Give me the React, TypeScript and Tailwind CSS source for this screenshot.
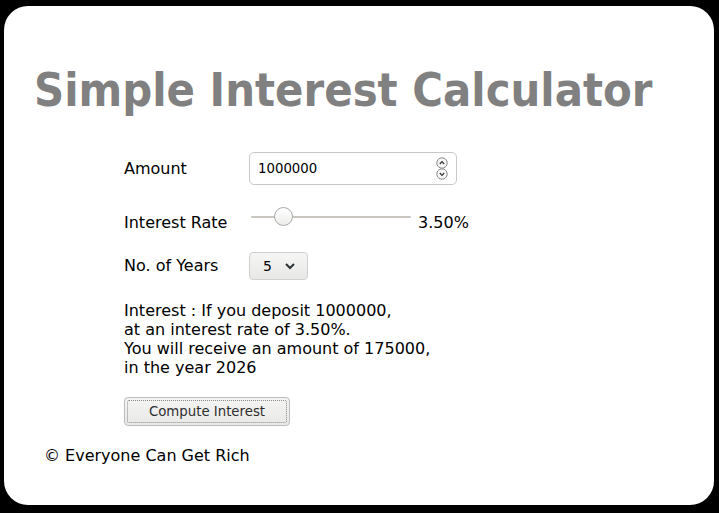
import React from "react";

const font = { fontFamily: '"DejaVu Sans", sans-serif' };
const cond = { fontFamily: '"DejaVu Sans Condensed", "DejaVu Sans", sans-serif' };

function Spinner() {
  return (
    <div className="flex flex-col items-center gap-0">
      <svg width="12" height="12" viewBox="0 0 12 12">
        <circle cx="6" cy="6" r="5.2" fill="#f7f7f7" stroke="#8a8a8a" strokeWidth="1" />
        <path d="M3.8 7 L6 4.6 L8.2 7" fill="none" stroke="#333" strokeWidth="1.2" />
      </svg>
      <svg width="12" height="12" viewBox="0 0 12 12" className="-mt-[1px]">
        <circle cx="6" cy="6" r="5.2" fill="#f7f7f7" stroke="#8a8a8a" strokeWidth="1" />
        <path d="M3.8 5 L6 7.4 L8.2 5" fill="none" stroke="#333" strokeWidth="1.2" />
      </svg>
    </div>
  );
}

export default function App() {
  return (
    <div className="w-[719px] h-[513px] bg-black pt-[6px] pl-[4px]" style={font}>
      <div className="w-[710px] h-[499px] bg-white rounded-[24px] flex flex-col text-black">
        <h1 className="mt-[56px] ml-[30px] text-[46.6px] leading-[56px] font-bold text-[#808080] whitespace-nowrap" style={cond}>
          Simple Interest Calculator
        </h1>
        <div className="ml-[120px] mt-[34px] flex flex-col text-[16px]">
          <div className="flex items-center h-[33px]">
            <div className="w-[125px]">Amount</div>
            <div className="w-[208px] h-[33px] border border-[#c8c8c8] rounded-[5px] flex items-center justify-between pl-[8px] pr-[8px] text-[13.3px]">
              <span>1000000</span>
              <Spinner />
            </div>
          </div>
          <div className="flex items-center h-[30px] mt-[22px]">
            <div className="w-[125px] pt-[2px]">Interest Rate</div>
            <div className="relative w-[162px] h-[30px] flex items-center ml-[2px] -mt-[10px]">
              <div className="w-[160px] h-[2px] bg-[#c9c6c0] rounded" />
              <div className="absolute left-[23px] top-[5px] w-[19px] h-[19px] rounded-full border border-[#a9a9a9] bg-gradient-to-b from-[#ffffff] to-[#ededeb]" />
            </div>
            <div className="ml-[5px] pt-[2px]">3.50%</div>
          </div>
          <div className="flex items-center h-[28px] mt-[15px]">
            <div className="w-[125px]">No. of Years</div>
            <div className="w-[59px] h-[28px] border border-[#cfcfcf] rounded-[4px] bg-gradient-to-b from-[#f6f6f5] to-[#e8e8e6] flex items-center pl-[13px] text-[14px]">
              <span>5</span>
              <svg width="12" height="10" viewBox="0 0 12 10" className="ml-[12px]">
                <path d="M2 3 L6 7 L10 3" fill="none" stroke="#2e3436" strokeWidth="2" />
              </svg>
            </div>
          </div>
          <div className="mt-[21px] leading-[19px]">
            <div>Interest : If you deposit 1000000,</div>
            <div>at an interest rate of 3.50%.</div>
            <div>You will receive an amount of 175000,</div>
            <div>in the year 2026</div>
          </div>
          <div className="mt-[20px]">
            <div className="w-[166px] h-[29px] border border-[#bcbcbc] rounded-[4px] bg-gradient-to-b from-[#f4f4f3] to-[#e9e9e7] p-[2px]">
              <div className="w-full h-full border border-dotted border-[#8a8a8a] rounded-[2px] flex items-center justify-center text-[13.3px] text-[#2e2e2e]">
                Compute Interest
              </div>
            </div>
          </div>
        </div>
        <div className="ml-[40px] mt-[18px] text-[16px]">© Everyone Can Get Rich</div>
      </div>
    </div>
  );
}
